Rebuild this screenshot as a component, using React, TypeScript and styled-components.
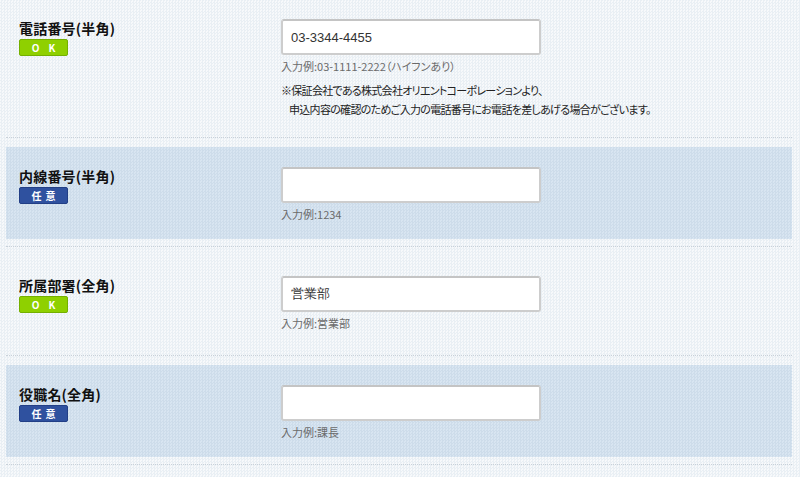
import React from "react"
import styled, { createGlobalStyle } from "styled-components"

const GlobalStyle = createGlobalStyle`
  html, body {
    margin: 0;
    padding: 0;
  }
  body {
    width: 800px;
    height: 477px;
    overflow: hidden;
    font-family: "Noto Sans CJK JP", "Noto Sans", sans-serif;
    background-color: #f1f5f8;
    background-image: repeating-conic-gradient(#e9eff4 0 25%, #f7f9fb 0 50%);
    background-size: 3px 3px;
  }
`

const Form = styled.div`
  padding: 0 8px 0 6px;
`
const Row = styled.div<{ $first?: boolean }>`
  padding: ${(p) => (p.$first ? "0" : "9px")} 0 7px;
  margin-top: ${(p) => (p.$first ? "-1px" : "0")};
  border-bottom: 1px dotted #c9d1d9;
`
const Box = styled.div<{ $tinted?: boolean }>`
  display: flex;
  padding: 20px 0 17px 13px;
  background-color: ${(p) => (p.$tinted ? "#d3e2ee" : "transparent")};
  background-image: ${(p) =>
    p.$tinted ? "repeating-conic-gradient(#cddcea 0 25%, #d8e5f1 0 50%)" : "none"};
  background-size: 3px 3px;
`
const Head = styled.div`
  width: 262px;
  flex: none;
`
const Label = styled.div`
  font-size: 14px;
  font-weight: bold;
  color: #111;
  line-height: 18px;
  letter-spacing: 0.2px;
`
const Badge = styled.div<{ $kind: "ok" | "any" }>`
  width: 47px;
  height: 15px;
  margin-top: 2px;
  border-radius: 2px;
  border: 1px solid ${(p) => (p.$kind === "ok" ? "#74b000" : "#223f86")};
  background: ${(p) => (p.$kind === "ok" ? "#8fd000" : "#2f519f")};
  color: #fff;
  font-size: 10px;
  font-weight: bold;
  line-height: 15px;
  text-align: center;
  letter-spacing: ${(p) => (p.$kind === "ok" ? "9px" : "4px")};
  text-indent: ${(p) => (p.$kind === "ok" ? "9px" : "4px")};
`
const Field = styled.div`
  flex: 1;
`
const Input = styled.input`
  display: block;
  box-sizing: border-box;
  width: 260px;
  height: 36px;
  margin: 0;
  padding: 0 8px;
  border: 2px solid #cdcdcd;
  border-top-color: #c4c4c4;
  border-radius: 3px;
  background: #fff;
  font-family: "Liberation Sans", sans-serif;
  font-size: 13px;
  color: #333;
  outline: none;
`
const Hint = styled.div`
  margin-top: 3px;
  font-size: 11px;
  line-height: 16px;
  height: 16px;
  color: #6a6a6a;
  font-feature-settings: "palt";
`
const Notes = styled.div`
  margin-top: 7px;
  margin-bottom: -6px;
  font-size: 11px;
  line-height: 19px;
  color: #222;
  letter-spacing: -0.7px;
  font-feature-settings: "palt";
`
const NoteLine = styled.div<{ $indent?: boolean }>`
  padding-left: ${(p) => (p.$indent ? "8px" : "0")};
`

type Item = {
  label: string
  required: boolean
  value: string
  hint: string
  tinted: boolean
  notes?: string[]
}

const items: Item[] = [
  {
    label: "電話番号(半角)",
    required: true,
    value: "03-3344-4455",
    hint: "入力例:03-1111-2222（ハイフンあり）",
    tinted: false,
    notes: [
      "※保証会社である株式会社オリエントコーポレーションより、",
      "申込内容の確認のためご入力の電話番号にお電話を差しあげる場合がございます。",
    ],
  },
  { label: "内線番号(半角)", required: false, value: "", hint: "入力例:1234", tinted: true },
  { label: "所属部署(全角)", required: true, value: "営業部", hint: "入力例:営業部", tinted: false },
  { label: "役職名(全角)", required: false, value: "", hint: "入力例:課長", tinted: true },
]

export default function App() {
  return (
    <>
      <GlobalStyle />
      <Form>
        {items.map((item, i) => (
          <Row key={item.label} $first={i === 0}>
            <Box $tinted={item.tinted}>
              <Head>
                <Label>{item.label}</Label>
                <Badge $kind={item.required ? "ok" : "any"}>{item.required ? "OK" : "任意"}</Badge>
              </Head>
              <Field>
                <Input type="text" defaultValue={item.value} />
                <Hint>{item.hint}</Hint>
                {item.notes && (
                  <Notes>
                    {item.notes.map((n, j) => (
                      <NoteLine key={j} $indent={j > 0}>
                        {n}
                      </NoteLine>
                    ))}
                  </Notes>
                )}
              </Field>
            </Box>
          </Row>
        ))}
      </Form>
    </>
  )
}
